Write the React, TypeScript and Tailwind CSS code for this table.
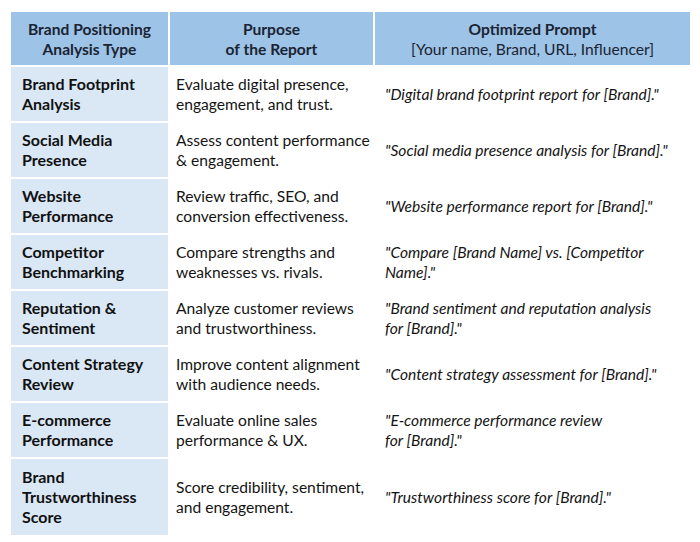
const rows: [string[], string[], string[]][] = [
  [["Brand Footprint", "Analysis"], ["Evaluate digital presence,", "engagement, and trust."], ["\"Digital brand footprint report for [Brand].\""]],
  [["Social Media", "Presence"], ["Assess content performance", "& engagement."], ["\"Social media presence analysis for [Brand].\""]],
  [["Website", "Performance"], ["Review traffic, SEO, and", "conversion effectiveness."], ["\"Website performance report for [Brand].\""]],
  [["Competitor", "Benchmarking"], ["Compare strengths and", "weaknesses vs. rivals."], ["\"Compare [Brand Name] vs. [Competitor", "Name].\""]],
  [["Reputation &", "Sentiment"], ["Analyze customer reviews", "and trustworthiness."], ["\"Brand sentiment and reputation analysis", "for [Brand].\""]],
  [["Content Strategy", "Review"], ["Improve content alignment", "with audience needs."], ["\"Content strategy assessment for [Brand].\""]],
  [["E-commerce", "Performance"], ["Evaluate online sales", "performance & UX."], ["\"E-commerce performance review", "for [Brand].\""]],
  [["Brand", "Trustworthiness", "Score"], ["Score credibility, sentiment,", "and engagement."], ["\"Trustworthiness score for [Brand].\""]],
]

function Lines({ lines }: { lines: string[] }) {
  return (
    <>
      {lines.map((l) => (
        <span key={l} className="block whitespace-nowrap">{l}</span>
      ))}
    </>
  )
}

export default function App() {
  return (
    <div className="h-[542px] w-[700px] bg-white pl-[11px] pt-[12px] font-['Lato',sans-serif] text-[15.6px] leading-[20px] text-[#141414]">
      <div className="grid grid-cols-[157px_203px_315px] gap-x-[2px] gap-y-[2px]">
        {/* Header */}
        <div className="flex h-[53px] flex-col items-center justify-center bg-[#9dc3e6] text-center font-bold text-[#1a2433]">
          <span>Brand Positioning</span>
          <span>Analysis Type</span>
        </div>
        <div className="flex h-[53px] flex-col items-center justify-center bg-[#9dc3e6] text-center font-bold text-[#1a2433]">
          <span>Purpose</span>
          <span>of the Report</span>
        </div>
        <div className="flex h-[53px] flex-col items-center justify-center bg-[#9dc3e6] text-center text-[#1a2433]">
          <span className="font-bold">Optimized Prompt</span>
          <span>[Your name, Brand, URL, Influencer]</span>
        </div>

        {/* Body */}
        {rows.map(([type, purpose, prompt], i) => {
          const h = i === rows.length - 1 ? "h-[76px]" : "h-[54px]"
          return (
            <div key={type.join(" ")} className="contents">
              <div className={`flex ${h} flex-col justify-center bg-[#dae8f6] pl-[11px] text-[16px] font-bold text-[#111]`}>
                <Lines lines={type} />
              </div>
              <div className={`flex ${h} flex-col justify-center pl-[6px]`}>
                <Lines lines={purpose} />
              </div>
              <div className={`flex ${h} flex-col justify-center pl-[10px] italic`}>
                <Lines lines={prompt} />
              </div>
            </div>
          )
        })}
      </div>
    </div>
  )
}
